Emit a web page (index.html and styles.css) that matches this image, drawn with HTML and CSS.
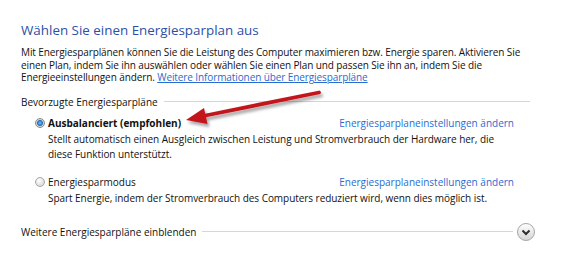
FILE: index.html
```html
<!DOCTYPE html>
<html lang="de">

<head>
    <meta charset="UTF-8">
    <meta name="viewport" content="width=device-width, initial-scale=1.0">
    <title>Energieoptionen</title>
    <link rel="stylesheet" href="styles.css">
</head>

<body>
    <div class="page">
        <h1 class="title">Wählen Sie einen Energiesparplan aus</h1>

        <p class="intro">
            Mit Energiesparplänen können Sie die Leistung des Computer maximieren bzw. Energie sparen. Aktivieren Sie<br>
            einen Plan, indem Sie ihn auswählen oder wählen Sie einen Plan und passen Sie ihn an, indem Sie die<br>
            Energieeinstellungen ändern. <a href="#">Weitere Informationen über Energiesparpläne</a>
        </p>

        <div class="group">
            <div class="group-head">
                <span>Bevorzugte Energiesparpläne</span>
                <span class="rule"></span>
            </div>

            <div class="plan">
                <div class="plan-row">
                    <label class="plan-name selected">
                        <span class="radio checked"></span>
                        Ausbalanciert (empfohlen)
                    </label>
                    <a href="#" class="plan-link">Energiesparplaneinstellungen ändern</a>
                </div>
                <p class="plan-desc">
                    Stellt automatisch einen Ausgleich zwischen Leistung und Stromverbrauch der Hardware her, die<br>
                    diese Funktion unterstützt.
                </p>
            </div>

            <div class="plan">
                <div class="plan-row">
                    <label class="plan-name">
                        <span class="radio"></span>
                        Energiesparmodus
                    </label>
                    <a href="#" class="plan-link">Energiesparplaneinstellungen ändern</a>
                </div>
                <p class="plan-desc">
                    Spart Energie, indem der Stromverbrauch des Computers reduziert wird, wenn dies möglich ist.
                </p>
            </div>
        </div>

        <div class="more">
            <span>Weitere Energiesparpläne einblenden</span>
            <span class="rule"></span>
            <span class="expand">
                <svg width="20" height="20" viewBox="0 0 20 20">
                    <defs>
                        <linearGradient id="btnGrad" x1="0" y1="0" x2="0" y2="1">
                            <stop offset="0" stop-color="#ffffff" />
                            <stop offset="1" stop-color="#d4d4d4" />
                        </linearGradient>
                    </defs>
                    <circle cx="10" cy="10" r="8.5" fill="url(#btnGrad)" stroke="#a6a6a6" />
                    <path d="M6.5 8.5 L10 12 L13.5 8.5" fill="none" stroke="#2e2e2e" stroke-width="2" />
                </svg>
            </span>
        </div>

        <!-- annotation arrow drawn over the screenshot -->
        <svg class="arrow" width="568" height="264" viewBox="0 0 568 264">
            <defs>
                <filter id="shadow" x="-10%" y="-30%" width="130%" height="180%">
                    <feDropShadow dx="2" dy="3" stdDeviation="1.6" flood-color="#000" flood-opacity="0.35" />
                </filter>
            </defs>
            <g filter="url(#shadow)">
                <line x1="319" y1="92.5" x2="203" y2="116" stroke="#c3161d" stroke-width="3.8" stroke-linecap="round" />
                <polygon points="186,120 204,108 207.5,124" fill="#c3161d" />
            </g>
        </svg>
    </div>
</body>

</html>
```

FILE: styles.css
```css
body {
    margin: 0;
    background: #ffffff;
    font-family: "Open Sans", "Noto Sans", sans-serif;
    font-size: 10px;
    color: #111111;
}

.page {
    position: relative;
    width: 568px;
    height: 264px;
    padding: 0 0 0 21px;
    box-sizing: border-box;
    overflow: hidden;
}

a {
    color: #2a6bd0;
    text-decoration: none;
}

.title {
    margin: 0;
    padding-top: 22px;
    font-size: 13.4px;
    font-weight: normal;
    line-height: 16px;
    color: #2c4fa6;
}

.intro {
    margin: 8px 0 0;
    line-height: 12.6px;
    letter-spacing: -0.1px;
}

.intro a {
    text-decoration: underline;
}

.group {
    margin-top: 11px;
}

.group-head,
.more {
    display: flex;
    align-items: center;
    height: 14px;
}

.group-head .rule,
.more .rule {
    flex: 1;
    height: 1px;
    margin-left: 6px;
    background: #d6d6d6;
}

.group-head .rule {
    margin-right: 38px;
}

.plan {
    padding-left: 27px;
}

.group-head + .plan {
    margin-top: 6px;
}

.plan + .plan {
    margin-top: 12px;
}

.plan-row {
    display: flex;
    align-items: center;
    justify-content: space-between;
    width: 466px;
    height: 16px;
}

.plan-name {
    display: flex;
    align-items: center;
    margin-left: -13px;
}

.plan-name.selected {
    font-weight: bold;
}

.radio {
    width: 8px;
    height: 8px;
    margin-right: 3px;
    border-radius: 50%;
    border: 1px solid #a9a9a9;
    background: radial-gradient(circle at 40% 35%, #ffffff, #dcdcdc 70%);
}

.radio.checked {
    background: radial-gradient(circle, #7cc4f2 0, #1e6fc4 2.5px, #d4d4d4 3.5px, #f0f0f0 100%);
    border-color: #8a8a8a;
}

.plan-desc {
    margin: 1px 0 0;
    line-height: 15px;
    letter-spacing: -0.05px;
}

.more {
    margin-top: 16px;
    height: 20px;
}

.more .rule {
    margin-right: 3px;
}

.expand {
    display: flex;
    margin-right: 32px;
}

.arrow {
    position: absolute;
    left: 0;
    top: 0;
    pointer-events: none;
}
```
